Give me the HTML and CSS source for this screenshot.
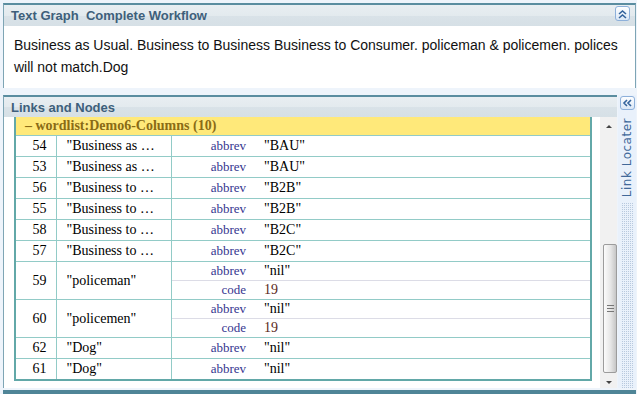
FILE: index.html
```html
<!DOCTYPE html>
<html lang="en">
  <head>
    <meta charset="UTF-8" />
    <title>Text Graph</title>
    <link rel="stylesheet" href="styles.css">
  </head>
  <body>
    <div class="panel panel-top">
      <div class="panel-head">
        <span class="panel-title">Text Graph  Complete Workflow</span>
        <button class="tool-btn tool-up">
          <svg width="13" height="12" viewBox="0 0 13 12"><path d="M3 6 L6.5 3 L10 6 M3 10 L6.5 7 L10 10" fill="none" stroke="#33639c" stroke-width="1.6"/></svg>
        </button>
      </div>
      <div class="panel-body">
        Business as Usual. Business to Business Business to Consumer. policeman &amp; policemen. polices will not match.Dog
      </div>
    </div>

    <div class="links-row">
      <div class="panel links">
        <div class="panel-head">
          <span class="panel-title">Links and Nodes</span>
        </div>
        <div class="links-body">
          <div class="grid-wrap">
            <table class="grid">
              <colgroup><col class="c-id"><col class="c-text"><col class="c-key"><col></colgroup>
              <tr class="group"><td colspan="4">&ndash; wordlist:Demo6-Columns (10)</td></tr>
              <tr><td class="id">54</td><td class="txt">"Business as &hellip;</td><td class="key">abbrev</td><td class="val">"BAU"</td></tr>
              <tr><td class="id">53</td><td class="txt">"Business as &hellip;</td><td class="key">abbrev</td><td class="val">"BAU"</td></tr>
              <tr><td class="id">56</td><td class="txt">"Business to &hellip;</td><td class="key">abbrev</td><td class="val">"B2B"</td></tr>
              <tr><td class="id">55</td><td class="txt">"Business to &hellip;</td><td class="key">abbrev</td><td class="val">"B2B"</td></tr>
              <tr><td class="id">58</td><td class="txt">"Business to &hellip;</td><td class="key">abbrev</td><td class="val">"B2C"</td></tr>
              <tr><td class="id">57</td><td class="txt">"Business to &hellip;</td><td class="key">abbrev</td><td class="val">"B2C"</td></tr>
              <tr class="sub1"><td class="id" rowspan="2">59</td><td class="txt" rowspan="2">"policeman"</td><td class="key">abbrev</td><td class="val">"nil"</td></tr>
              <tr class="sub2"><td class="key">code</td><td class="val num">19</td></tr>
              <tr class="sub1"><td class="id" rowspan="2">60</td><td class="txt" rowspan="2">"policemen"</td><td class="key">abbrev</td><td class="val">"nil"</td></tr>
              <tr class="sub2"><td class="key">code</td><td class="val num">19</td></tr>
              <tr><td class="id">62</td><td class="txt">"Dog"</td><td class="key">abbrev</td><td class="val">"nil"</td></tr>
              <tr><td class="id">61</td><td class="txt">"Dog"</td><td class="key">abbrev</td><td class="val">"nil"</td></tr>
            </table>
          </div>
          <div class="scrollbar">
            <div class="sb-btn"><span class="arrow-up"></span></div>
            <div class="sb-space"></div>
            <div class="thumb"><span class="grip"></span></div>
            <div class="sb-btn sb-down"><span class="arrow-down"></span></div>
          </div>
        </div>
      </div>
      <div class="side">
        <button class="tool-btn tool-left">
          <svg width="13" height="12" viewBox="0 0 13 12"><path d="M6 3 L3 6 L6 9 M10 3 L7 6 L10 9" fill="none" stroke="#33639c" stroke-width="1.6"/></svg>
        </button>
        <div class="side-label">Link Locater</div>
        <div class="dots"></div>
      </div>
    </div>

    <div class="panel-next"></div>
  </body>
</html>
```

FILE: styles.css
```css
body {
  margin: 0;
  padding: 3px 1px 0 3px;
  height: 394px;
  box-sizing: border-box;
  overflow: hidden;
  background: #eef4fb;
  font-family: "Liberation Sans", Arial, sans-serif;
}
.panel {
  background: #fff;
  border-top: 2px solid #5a8da0;
  border-left: 1px solid #7ea5b5;
}
.panel-top {
  height: 85px;
  box-sizing: border-box;
  border-right: 1px solid #7ea5b5;
}
.panel-head {
  display: flex;
  align-items: flex-start;
  justify-content: space-between;
  height: 21px;
  background: linear-gradient(#e8eef2 0, #e3eaee 50%, #d9e2e8 52%, #d6e0e6 100%);
}
.links .panel-head {
  height: 20px;
}
.panel-title {
  padding: 3px 0 0 7px;
  font-size: 13px;
  line-height: 15px;
  font-weight: bold;
  color: #3e5f7b;
  white-space: pre;
}
.tool-btn {
  display: flex;
  align-items: center;
  justify-content: center;
  width: 15px;
  height: 15px;
  padding: 0;
  border: 1px solid #8db0da;
  border-radius: 3px;
  background: linear-gradient(#fdfeff, #dae7f6);
}
.tool-up {
  margin: 1px 5px 0 0;
}
.panel-body {
  padding: 8px 10px 0 10px;
  font-size: 14px;
  line-height: 22px;
  color: #111;
}

/* links and nodes */
.links-row {
  display: flex;
  margin-top: 7px;
}
.links {
  width: 614px;
}
.links-body {
  display: flex;
  height: 271px;
}
.grid-wrap {
  flex: 1;
  padding-left: 10px;
}
.grid {
  width: 578px;
  table-layout: fixed;
  border-collapse: collapse;
  border: 2px solid #62a8a8;
  border-top: 0;
  font-family: "Liberation Serif", "Times New Roman", serif;
  font-size: 14px;
  color: #000;
}
.c-id {
  width: 41px;
}
.c-text {
  width: 115px;
}
.c-key {
  width: 75px;
}
.grid td {
  height: 20px;
  padding: 0;
  border-bottom: 1px solid #92cbc7;
  white-space: nowrap;
  vertical-align: middle;
}
.grid .group td {
  height: 18px;
  padding-left: 9px;
  background: #ffe97a;
  color: #8a6b15;
  font-weight: bold;
}
.grid .id {
  text-align: right;
  padding-right: 9px;
  border-right: 1px solid #92cbc7;
}
.grid .txt {
  padding-left: 10px;
  border-right: 1px solid #92cbc7;
}
.grid .key {
  text-align: right;
  font-size: 13px;
  color: #35358f;
}
.grid .val {
  padding-left: 18px;
}
.grid .num {
  color: #5b2a1a;
}
.grid .sub1 .key,
.grid .sub1 .val {
  height: 18px;
  border-bottom: 1px solid #dcdce6;
}
.grid .sub2 .key,
.grid .sub2 .val {
  height: 18px;
}

/* scrollbar */
.scrollbar {
  display: flex;
  flex-direction: column;
  width: 17px;
  background: #f1f1f1;
}
.sb-btn {
  display: flex;
  justify-content: center;
  align-items: center;
  height: 19px;
  padding-left: 1px;
}
.sb-space {
  height: 108px;
}
.sb-down {
  height: 15px;
  padding-top: 3px;
  box-sizing: border-box;
}
.arrow-up {
  border-left: 3px solid transparent;
  border-right: 3px solid transparent;
  border-bottom: 3px solid #444;
}
.arrow-down {
  border-left: 3px solid transparent;
  border-right: 3px solid transparent;
  border-top: 3px solid #444;
}
.thumb {
  display: flex;
  justify-content: center;
  align-items: center;
  width: 14px;
  height: 129px;
  box-sizing: border-box;
  margin-left: 3px;
  border: 1px solid #9c9c9c;
  border-radius: 2px;
  background: linear-gradient(90deg, #fbfbfb, #e6e6e6 55%, #c6c6c6);
}
.grip {
  width: 7px;
  height: 5px;
  border-top: 1px solid #777;
  border-bottom: 1px solid #777;
  background: linear-gradient(transparent 2px, #777 2px, #777 3px, transparent 3px);
}

/* side strip */
.side {
  display: flex;
  flex-direction: column;
  align-items: center;
  width: 18px;
  margin-left: 1px;
  background: #e9f1fb;
}
.tool-left {
  margin-top: 1px;
  height: 14px;
}
.side-label {
  margin-top: 8px;
  writing-mode: vertical-rl;
  transform: rotate(180deg);
  font-family: "DejaVu Sans", Verdana, sans-serif;
  font-size: 12px;
  letter-spacing: 0.5px;
  color: #41699a;
}
.dots {
  flex: 1;
  align-self: stretch;
  margin: 5px 2px 0 3px;
  background-image: linear-gradient(90deg, #e9f1fb 1px, transparent 1px), linear-gradient(#e9f1fb 1px, #b8c9de 1px);
  background-size: 2px 2px;
}
.panel-next {
  margin-top: 2px;
  border-top: 4px solid #4f8597;
}
```
